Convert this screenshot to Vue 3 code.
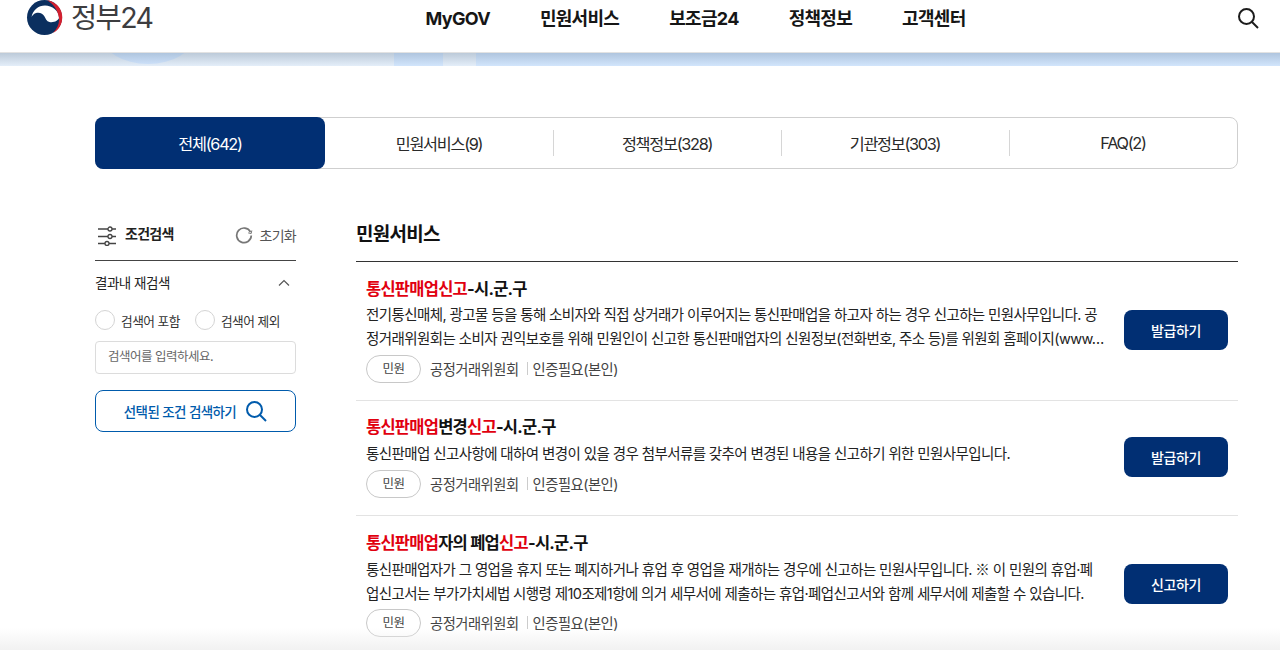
<template>
  <div class="page">
    <header class="top">
      <div class="logo">
        <svg class="emblem" width="37" height="36" viewBox="0 0 37 36">
          <circle cx="18.500" cy="17.500" r="17.500" fill="#0b2f5f" />
          <path d="M5.500 17.500C6.500 10 12.500 5.500 19 5.500c7 0 14 5 14 12 0 3-5.500 5.500-9.500 4.500-3-.7-4-3.500-5-5.500C17 13 13 12 10 13c-2.500 1-4 2.500-4.500 4.500Z" fill="#fff" />
          <path d="M21 .2A17.500 17.500 0 0 1 27 33C32 28 33.800 22 32.800 17 31.500 9 26.500 3 21 .2Z" fill="#d3202f" />
        </svg>
        <span class="logo-text">정부24</span>
      </div>
      <nav class="gnb">
        <a v-for="n in nav" :key="n">{{ n }}</a>
      </nav>
      <svg class="top-search" width="24" height="24" viewBox="0 0 24 24" fill="none" stroke="#1c1c1c" stroke-width="2">
        <circle cx="10.500" cy="10.500" r="7.500" />
        <path d="M16 16l6 6" />
      </svg>
    </header>
    <div class="band">
      <div class="seg grey first"><div class="band-glow"></div></div>
      <div class="seg blue patch"></div>
      <div class="seg grey gap"></div>
      <div class="seg blue rest"></div>
    </div>

    <main class="content">
      <div class="tabs">
        <button v-for="(t, i) in tabs" :key="t" class="tab" :class="{ active: i === 0 }">
          {{ t }}
        </button>
      </div>

      <div class="columns">
        <aside class="side">
          <div class="side-head">
            <svg width="20" height="20" viewBox="0 0 20 20" fill="none" stroke="#444" stroke-width="1.300">
              <path d="M1 3h10M15 3h4M1 10.500h10M15 10.500h4M1 17.500h7M12 17.500h7" />
              <circle cx="13" cy="3" r="2" />
              <circle cx="13" cy="10.500" r="2" />
              <circle cx="10" cy="17.500" r="2" />
            </svg>
            <strong>조건검색</strong>
            <span class="reset">
              <svg width="18" height="18" viewBox="0 0 18 18" fill="none" stroke="#777" stroke-width="1.700">
                <path d="M15.500 6A7.300 7.300 0 1 0 16.300 9.500" />
                <path d="M16.800 4.500l-.6 3-3-.6" stroke-width="1" />
              </svg>
              초기화
            </span>
          </div>
          <div class="side-sub">
            <span>결과내 재검색</span>
            <svg width="12" height="8" viewBox="0 0 12 8" fill="none" stroke="#555" stroke-width="1.200"><path d="M1 6.500l5-5 5 5" /></svg>
          </div>
          <div class="radios">
            <label><i></i>검색어 포함</label>
            <label><i></i>검색어 제외</label>
          </div>
          <div class="input">검색어를 입력하세요.</div>
          <button class="side-btn">
            선택된 조건 검색하기
            <svg width="22" height="22" viewBox="0 0 22 22" fill="none" stroke="#005bac" stroke-width="2">
              <circle cx="9.500" cy="9.500" r="7.500" />
              <path d="M15 15l6 6" />
            </svg>
          </button>
        </aside>

        <section class="results">
          <h2>민원서비스</h2>
          <article v-for="(r, i) in rows" :key="i" class="row" :class="r.cls">
            <div class="row-main">
              <h3><template v-for="(p, j) in r.title" :key="j"><em v-if="p.hit">{{ p.t }}</em><template v-else>{{ p.t }}</template></template></h3>
              <p><template v-for="(s, k) in r.desc.split('※')" :key="k"><span v-if="k" class="ref">※</span>{{ s }}</template></p>
              <div class="meta">
                <span class="pill">민원</span>
                <span class="org">공정거래위원회</span>
                <span class="auth">인증필요(본인)</span>
              </div>
            </div>
            <button class="act">{{ r.btn }}</button>
          </article>
        </section>
      </div>
    </main>
    <div class="fade"></div>
  </div>
</template>

<script setup>
const nav = ['MyGOV', '민원서비스', '보조금24', '정책정보', '고객센터']
const tabs = ['전체(642)', '민원서비스(9)', '정책정보(328)', '기관정보(303)', 'FAQ(2)']
const rows = [
  {
    cls: 'r1',
    title: [{ t: '통신판매업신고', hit: true }, { t: '-시.군.구' }],
    desc: '전기통신매체, 광고물 등을 통해 소비자와 직접 상거래가 이루어지는 통신판매업을 하고자 하는 경우 신고하는 민원사무입니다. 공정거래위원회는 소비자 권익보호를 위해 민원인이 신고한 통신판매업자의 신원정보(전화번호, 주소 등)를 위원회 홈페이지(www…',
    btn: '발급하기'
  },
  {
    cls: 'r2',
    title: [{ t: '통신판매업', hit: true }, { t: '변경' }, { t: '신고', hit: true }, { t: '-시.군.구' }],
    desc: '통신판매업 신고사항에 대하여 변경이 있을 경우 첨부서류를 갖추어 변경된 내용을 신고하기 위한 민원사무입니다.',
    btn: '발급하기'
  },
  {
    cls: 'r3',
    title: [{ t: '통신판매업', hit: true }, { t: '자의 폐업' }, { t: '신고', hit: true }, { t: '-시.군.구' }],
    desc: '통신판매업자가 그 영업을 휴지 또는 폐지하거나 휴업 후 영업을 재개하는 경우에 신고하는 민원사무입니다. ※ 이 민원의 휴업·폐업신고서는 부가가치세법 시행령 제10조제1항에 의거 세무서에 제출하는 휴업·폐업신고서와 함께 세무서에 제출할 수 있습니다.',
    btn: '신고하기'
  }
]
</script>

<style>
html, body { margin: 0; background: #fff; overflow: hidden; }
</style>

<style scoped>
.page {
  position: relative;
  width: 1280px;
  height: 650px;
  overflow: hidden;
  background: #fff;
  color: #1b1b1b;
  font-family: Inter, "Noto Sans CJK KR", "Noto Sans", sans-serif;
}
.top {
  position: relative;
  height: 52px;
  display: flex;
  align-items: flex-start;
}
.logo {
  display: flex;
  align-items: center;
  margin-left: 26px;
  height: 36px;
  width: 374px;
  flex: none;
}
.emblem { flex: none; }
.logo-text {
  margin-left: 8px;
  font-size: 28.500px;
  font-weight: 400;
  line-height: 36px;
  letter-spacing: -1.600px;
  color: #3d3d3f;
}
.gnb {
  display: flex;
  gap: 50px;
  padding-left: 25.500px;
  font-size: 18px;
  font-weight: 700;
  letter-spacing: -.7px;
  line-height: 37px;
  color: #161616;
}
.top-search { position: absolute; right: 20px; top: 6px; }
.band {
  display: flex;
  height: 14px;
  overflow: hidden;
  border-top: 1px solid #e2e2e2;
  box-sizing: border-box;
}
.seg { position: relative; overflow: hidden; }
.grey { background: linear-gradient(#bccad9, #e4eef9); }
.blue { background: linear-gradient(#afc5de, #d2e5fc); }
.first { width: 394px; }
.patch { width: 49px; }
.gap { width: 33px; }
.rest { flex: 1; }
.band-glow {
  position: absolute;
  left: 102px;
  top: -46px;
  width: 92px;
  height: 57px;
  border-radius: 50%;
  background: linear-gradient(#afc5de calc(100% - 11px), #cbdff8);
}
.content { padding: 51px 42px 0 95px; }
.tabs {
  display: flex;
  height: 52px;
  box-sizing: border-box;
  border: 1px solid #cfcfcf;
  border-radius: 8px;
}
.tab {
  position: relative;
  flex: 1 1 0;
  margin: 0;
  padding: 0 0 1px;
  border: 0;
  background: none;
  font: inherit;
  font-size: 16.300px;
  letter-spacing: -1.300px;
  color: #2a2a2a;
}
.tab + .tab::before {
  content: "";
  position: absolute;
  left: 0;
  top: 12px;
  bottom: 12px;
  width: 1px;
  background: #d6d6d6;
}
.tab:nth-child(2)::before { display: none; }
.tab.active {
  flex: none;
  width: 230px;
  margin: -1px 0 -1px -1px;
  background: #012f73;
  color: #fff;
  border-radius: 8px;
}
.columns {
  display: flex;
  gap: 60px;
  margin-top: 47px;
}
.side { width: 201px; flex: none; }
.side-head {
  display: flex;
  align-items: center;
  height: 36px;
  padding: 0 0 8px 2px;
  border-bottom: 1px solid #444;
  font-size: 14px;
  letter-spacing: -.7px;
}
.side-head > svg { margin-top: 3px; }
.side-head strong { margin: 0 0 2px 8px; font-weight: 700; color: #222; }
.reset {
  margin-left: auto;
  margin-top: 2px;
  display: flex;
  align-items: center;
  gap: 6px;
  font-size: 14px;
  color: #555;
}
.side-sub {
  display: flex;
  align-items: center;
  justify-content: space-between;
  height: 44px;
  padding-right: 6px;
  font-size: 13.500px;
  letter-spacing: -.5px;
  color: #222;
}
.side-sub span { margin-bottom: 2px; }
.radios {
  display: flex;
  gap: 15px;
  margin-top: 4px;
  height: 22px;
}
.radios label {
  display: flex;
  align-items: center;
  gap: 6px;
  font-size: 12.700px;
  letter-spacing: -.5px;
  color: #333;
}
.radios i {
  width: 20px;
  height: 20px;
  box-sizing: border-box;
  border: 1px solid #d4d4d4;
  border-radius: 50%;
}
.input {
  margin-top: 10px;
  height: 33px;
  box-sizing: border-box;
  border: 1px solid #dcdcdc;
  border-radius: 4px;
  padding-left: 12px;
  line-height: 29px;
  font-size: 12.500px;
  letter-spacing: -.5px;
  color: #666;
}
.side-btn {
  display: flex;
  align-items: center;
  justify-content: center;
  gap: 9px;
  width: 100%;
  height: 42px;
  margin-top: 16px;
  border: 1px solid #005bac;
  border-radius: 8px;
  background: #fff;
  font: inherit;
  font-size: 13.500px;
  font-weight: 500;
  letter-spacing: -.6px;
  color: #005bac;
}
.results { flex: 1; min-width: 0; }
h2 {
  margin: 0;
  height: 45px;
  border-bottom: 1px solid #333;
  font-size: 19px;
  font-weight: 700;
  line-height: 38px;
  letter-spacing: -.7px;
  color: #111;
}
.row {
  display: flex;
  align-items: center;
  box-sizing: border-box;
  padding: 0 10px;
  border-bottom: 1px solid #e3e3e3;
}
.r1 { height: 139px; }
.r2 { height: 115px; }
.r3 { height: 138px; border-bottom: 0; }
.row-main { flex: 1; min-width: 0; align-self: flex-start; padding-top: 15px; }
.r2 .row-main { padding-top: 14px; }
h3 {
  margin: 0;
  font-size: 16.500px;
  font-weight: 700;
  line-height: 24px;
  letter-spacing: -.75px;
  color: #111;
}
h3 em { font-style: normal; color: #e1000f; }
p {
  width: 738px;
  margin: 2px 0 0;
  font-size: 14.500px;
  line-height: 24px;
  letter-spacing: -.6px;
  color: #222;
}
.r2 p { margin-top: 3px; }
.ref { font-family: "Noto Sans CJK KR", sans-serif; }
.meta {
  display: flex;
  align-items: center;
  height: 28px;
  margin-top: 4px;
  font-size: 14.300px;
  letter-spacing: -.5px;
  color: #444;
}
.r3 .meta { margin-top: 3px; }
.pill {
  width: 55px;
  height: 28px;
  box-sizing: border-box;
  border: 1px solid #c8c8c8;
  border-radius: 14px;
  text-align: center;
  line-height: 26px;
  font-size: 12.500px;
  color: #444;
}
.org { margin: 0 0 2px 9px; }
.auth {
  margin: 0 0 2px 8px;
  padding-left: 6px;
  position: relative;
}
.auth::before {
  content: "";
  position: absolute;
  left: 0;
  top: 4px;
  bottom: 4px;
  width: 1px;
  background: #ccc;
}
.act {
  flex: none;
  width: 104px;
  height: 40px;
  margin: 0 0 2px 20px;
  border: 0;
  border-radius: 8px;
  background: #012f73;
  color: #fff;
  font: inherit;
  font-size: 14px;
  font-weight: 500;
  letter-spacing: -.4px;
}
.fade {
  position: absolute;
  left: 0;
  right: 0;
  bottom: 0;
  height: 22px;
  background: linear-gradient(rgba(240,240,240,0), rgba(240,240,240,.9));
  pointer-events: none;
}
</style>
